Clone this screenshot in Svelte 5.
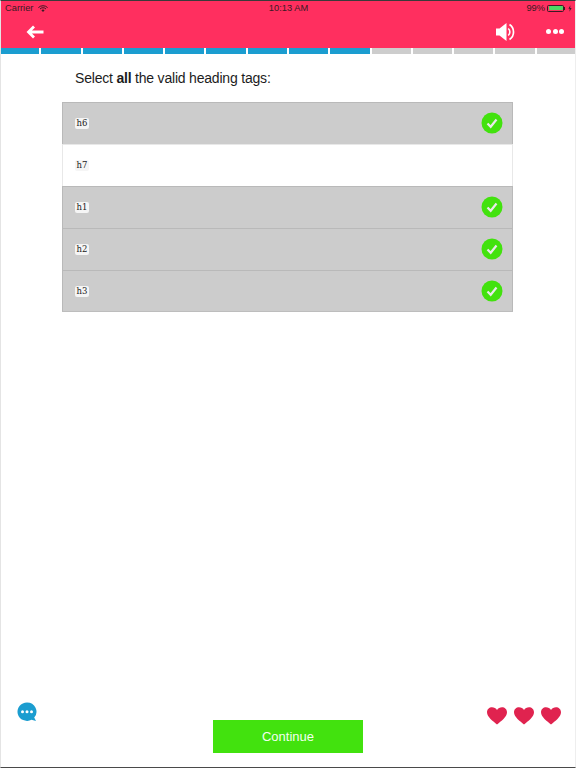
<script>
	const options = [
		{ tag: "h6", picked: true },
		{ tag: "h7", picked: false },
		{ tag: "h1", picked: true },
		{ tag: "h2", picked: true },
		{ tag: "h3", picked: true }
	];
	const segments = Array.from({ length: 14 }, (_, i) => i < 9);
	const hearts = [0, 1, 2];
</script>

<div class="screen">
	<header class="top">
		<div class="status">
			<div class="status-left">
				<span>Carrier</span>
				<svg class="wifi" viewBox="0 0 10 7" width="10" height="7">
					<path d="M5 7 L3.4 5.2 A2.4 2.4 0 0 1 6.6 5.2 Z" fill="#3a1a24" />
					<path d="M0.4 2.6 A6.6 6.6 0 0 1 9.6 2.6" fill="none" stroke="#3a1a24" stroke-width="1" />
					<path d="M2 4 A4.2 4.2 0 0 1 8 4" fill="none" stroke="#3a1a24" stroke-width="1" />
				</svg>
			</div>
			<span class="clock">10:13 AM</span>
			<div class="status-right">
				<span>99%</span>
				<span class="battery"><span class="charge"></span></span>
				<span class="nub"></span>
				<svg class="flash" viewBox="0 0 5 8" width="4" height="7"><path d="M3 0 L0.5 4.4 H2.2 L1.8 8 L4.5 3.4 H2.7 Z" fill="#3a1a24" /></svg>
			</div>
		</div>
		<div class="toolbar">
			<svg class="back" viewBox="0 0 18 14" width="18" height="14">
				<path d="M17.5 7 H3 M8 1.5 L2.5 7 L8 12.5" fill="none" stroke="#fff" stroke-width="2.8" />
			</svg>
			<div class="tools">
				<svg viewBox="0 0 19 18" width="19" height="18">
					<path d="M0 5.5 H3.5 L10.5 0 V18 L3.5 12.5 H0 Z" fill="#fff" />
					<path d="M12.2 5.5 A4.5 4.5 0 0 1 12.2 12.5" fill="none" stroke="#fff" stroke-width="1.6" />
					<path d="M13.5 1.5 A9 9 0 0 1 13.5 16.5" fill="none" stroke="#fff" stroke-width="1.7" />
				</svg>
				<div class="dots"><i></i><i></i><i></i></div>
			</div>
		</div>
	</header>

	<div class="progress">
		{#each segments as done}
			<span class:done></span>
		{/each}
	</div>

	<main class="quiz">
		<p class="question">Select <b>all</b> the valid heading tags:</p>
		<ul class="options">
			{#each options as o}
				<li class:picked={o.picked}>
					<code>{o.tag}</code>
					{#if o.picked}
						<svg viewBox="0 0 22 22" width="22" height="22">
							<circle cx="11" cy="11" r="10.5" fill="#42e20e" />
							<path d="M6.5 11.5 L9.7 14.8 L15.5 7.5" fill="none" stroke="#e9e9e9" stroke-width="2.2" />
						</svg>
					{/if}
				</li>
			{/each}
		</ul>
	</main>

	<footer class="bottom">
		<svg class="chat" viewBox="0 0 20 20" width="20" height="20">
			<path d="M10 0.5 A9.5 9.2 0 1 0 14.5 17.8 L19 19 L17.2 15.6 A9.5 9.2 0 0 0 10 0.5 Z" fill="#1b9dd0" />
			<circle cx="5.5" cy="9.7" r="1.5" fill="#fff" />
			<circle cx="10" cy="9.7" r="1.5" fill="#fff" />
			<circle cx="14.5" cy="9.7" r="1.5" fill="#fff" />
		</svg>
		<button class="continue">Continue</button>
		<div class="hearts">
			{#each hearts as h}
				<svg viewBox="0 0 20 18" width="20" height="18" data-h={h}>
					<path d="M10 17.5 C6 14 0 10 0 5.2 C0 2.2 2.3 0.2 5 0.2 C7 0.2 9 1.2 10 3 C11 1.2 13 0.2 15 0.2 C17.7 0.2 20 2.2 20 5.2 C20 10 14 14 10 17.5 Z" fill="#e0234f" />
				</svg>
			{/each}
		</div>
	</footer>
</div>

<style>
	:global(body) {
		margin: 0;
		background: #fff;
	}

	.screen {
		width: 576px;
		height: 768px;
		box-sizing: border-box;
		display: flex;
		flex-direction: column;
		border-top: 1px solid #3a3a3a;
		border-bottom: 1px solid #4a4a4a;
		border-left: 1px solid #e4e4e4;
		border-right: 1px solid #eeeeee;
		font-family: "Liberation Sans", Arial, sans-serif;
		overflow: hidden;
	}

	.top {
		height: 47px;
		margin: 0 -1px;
		background: #ff2f5f;
		flex-shrink: 0;
	}

	.status {
		height: 14px;
		padding: 0 4px 0 5px;
		display: grid;
		grid-template-columns: 1fr auto 1fr;
		align-items: center;
		font-size: 9.3px;
		color: #3a1a24;
	}

	.status-left {
		display: flex;
		align-items: center;
		gap: 5px;
	}

	.clock {
		font-weight: 500;
	}

	.status-right {
		display: flex;
		align-items: center;
		justify-content: flex-end;
	}

	.battery {
		width: 17px;
		height: 7px;
		margin-left: 2px;
		box-sizing: border-box;
		padding: 0.5px;
		border: 0.5px solid #3a1a24;
		border-radius: 1.5px;
		display: block;
	}

	.charge {
		display: block;
		height: 100%;
		background: #4cd964;
		border-radius: 1px;
	}

	.nub {
		width: 1px;
		height: 3px;
		background: #3a1a24;
	}

	.flash {
		margin-left: 3px;
	}

	.toolbar {
		height: 33px;
		padding: 0 12px 0 26px;
		display: flex;
		align-items: center;
		justify-content: space-between;
	}

	.tools {
		display: flex;
		align-items: center;
		gap: 31px;
	}

	.dots {
		display: flex;
		gap: 1.5px;
	}

	.dots i {
		width: 5px;
		height: 5px;
		border-radius: 50%;
		background: #fff;
	}

	.progress {
		height: 6px;
		margin: 0 -1px;
		flex-shrink: 0;
		display: flex;
		gap: 2px;
	}

	.progress span {
		flex: 1;
		background: #cdcdcd;
	}

	.progress span.done {
		background: #1b9dd0;
	}

	.quiz {
		flex: 1;
		padding: 0 61px;
	}

	.question {
		margin: 15px 0 15px 13px;
		font-size: 14px;
		letter-spacing: -0.2px;
		line-height: 18px;
		color: #1c1c1c;
	}

	.options {
		margin: 0;
		padding: 0;
		list-style: none;
		border-bottom: 1px solid #bdbdbd;
		width: 451px;
		box-sizing: border-box;
	}

	.options li {
		height: 42px;
		box-sizing: border-box;
		padding: 0 9px 1px 12px;
		display: flex;
		align-items: center;
		justify-content: space-between;
		border: 1px solid #b9b9b9;
		border-bottom: 0;
	}

	.options li:last-child {
		height: 41px;
		padding-bottom: 0;
	}

	.options li.picked {
		background: #cccccc;
	}

	.options li:not(.picked) {
		background: #fff;
		border-color: #e8e8e8;
	}

	code {
		font-family: "DejaVu Serif", "Liberation Mono", monospace;
		font-size: 8.5px;
		line-height: 11px;
		padding: 0 1.5px;
		border-radius: 2px;
		background: #f5f5f5;
		color: #222;
	}

	.bottom {
		height: 72px;
		padding: 0 14px;
		flex-shrink: 0;
		display: grid;
		grid-template-columns: 1fr auto 1fr;
		align-items: start;
	}

	.chat {
		margin: 7px 0 0 2px;
	}

	.continue {
		grid-column: 2;
		width: 150px;
		height: 33px;
		margin-top: 25px;
		border: 0;
		background: #42e20e;
		color: #f3fff0;
		font: inherit;
		font-size: 13px;
	}

	.hearts {
		display: flex;
		justify-content: flex-end;
		gap: 7px;
		margin-top: 12px;
	}
</style>
